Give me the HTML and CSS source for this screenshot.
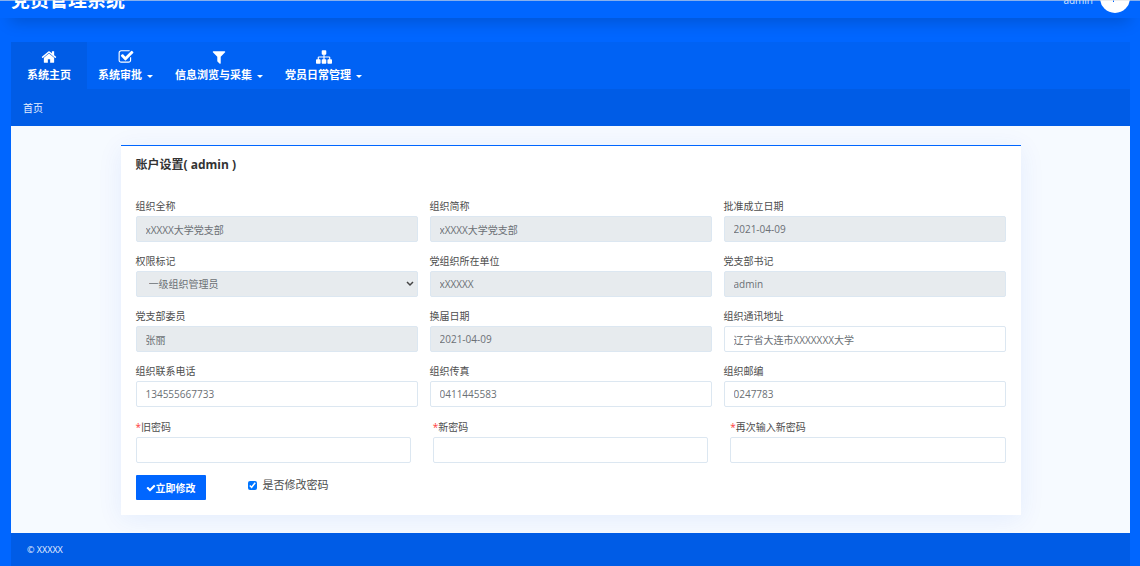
FILE: index.html
```
<!DOCTYPE html>
<html lang="zh-CN">
<head>
<meta charset="utf-8">
<title>党员管理系统</title>
<link rel="stylesheet" href="styles.css">
</head>
<body>
<header class="topbar">
  <h1 class="brand">党员管理系统</h1>
  <div class="user">
    <span class="user-name">admin</span>
    <svg class="avatar" viewBox="0 0 30 30" aria-hidden="true"><circle cx="15" cy="15" r="15" fill="#fff"/><path d="M13.500 11v8" stroke="#0066ff" stroke-width="1"/></svg>
  </div>
</header>
<div class="shell">
  <nav class="menu">
    <a class="menu-item active" href="#">
      <svg class="icon" viewBox="0 0 1792 1792"><path d="M1472 992v480q0 26-19 45t-45 19h-384v-384h-256v384h-384q-26 0-45-19t-19-45v-480q0-1 .5-3t.5-3l575-474 575 474q1 2 1 6zm223-69l-62 74q-8 9-21 11h-3q-13 0-21-7l-692-577-692 577q-12 8-24 7-13-2-21-11l-62-74q-8-10-7-23.500t11-21.500l719-599q32-26 76-26t76 26l244 204v-195q0-14 9-23t23-9h192q14 0 23 9t9 23v408l219 182q10 8 11 21.500t-7 23.500z"/></svg>
      <span class="menu-text">系统主页</span>
    </a>
    <a class="menu-item" href="#">
      <svg class="icon" viewBox="0 0 1792 1792"><path d="M1472 930v318q0 119-84.500 203.500t-203.500 84.500h-832q-119 0-203.500-84.500t-84.500-203.500v-832q0-119 84.500-203.500t203.500-84.500h832q63 0 117 25 15 7 18 23 3 17-9 29l-49 49q-10 10-23 10-3 0-9-2-23-6-45-6h-832q-66 0-113 47t-47 113v832q0 66 47 113t113 47h832q66 0 113-47t47-113v-254q0-13 9-22l64-64q10-10 23-10 6 0 12 3 20 8 20 29zm231-489l-814 814q-24 24-57 24t-57-24l-430-430q-24-24-24-57t24-57l110-110q24-24 57-24t57 24l263 263 647-647q24-24 57-24t57 24l110 110q24 24 24 57t-24 57z"/></svg>
      <span class="menu-text caret">系统审批</span>
    </a>
    <a class="menu-item" href="#">
      <svg class="icon" viewBox="0 0 1792 1792"><path d="M1595 295q17 41-14 70l-493 493v742q0 42-39 59-13 5-25 5-27 0-45-19l-256-256q-19-19-19-45v-486l-493-493q-31-29-14-70 17-39 59-39h1280q42 0 59 39z"/></svg>
      <span class="menu-text caret">信息浏览与采集</span>
    </a>
    <a class="menu-item" href="#">
      <svg class="icon" viewBox="0 0 1792 1792"><path d="M1792 1248v320q0 40-28 68t-68 28h-320q-40 0-68-28t-28-68v-320q0-40 28-68t68-28h96v-192h-512v192h96q40 0 68 28t28 68v320q0 40-28 68t-68 28h-320q-40 0-68-28t-28-68v-320q0-40 28-68t68-28h96v-192h-512v192h96q40 0 68 28t28 68v320q0 40-28 68t-68 28h-320q-40 0-68-28t-28-68v-320q0-40 28-68t68-28h96v-192q0-52 38-90t90-38h512v-192h-96q-40 0-68-28t-28-68v-320q0-40 28-68t68-28h320q40 0 68 28t28 68v320q0 40-28 68t-68 28h-96v192h512q52 0 90 38t38 90v192h96q40 0 68 28t28 68z"/></svg>
      <span class="menu-text caret">党员日常管理</span>
    </a>
  </nav>
  <div class="crumbs"><a href="#">首页</a></div>
  <main class="content">
    <form class="card">
      <h2 class="card-title">账户设置( admin )</h2>
      <div class="grid">
        <div class="field"><label for="full">组织全称</label><input id="full" type="text" value="xXXXX大学党支部" readonly></div>
        <div class="field"><label for="short">组织简称</label><input id="short" type="text" value="xXXXX大学党支部" readonly></div>
        <div class="field"><label for="founded">批准成立日期</label><input id="founded" type="text" value="2021-04-09" readonly></div>
        <div class="field"><label for="role">权限标记</label><select id="role" disabled><option>一级组织管理员</option></select></div>
        <div class="field"><label for="unit">党组织所在单位</label><input id="unit" type="text" value="xXXXXX" readonly></div>
        <div class="field"><label for="secretary">党支部书记</label><input id="secretary" type="text" value="admin" readonly></div>
        <div class="field"><label for="member">党支部委员</label><input id="member" type="text" value="张丽" readonly></div>
        <div class="field"><label for="term">换届日期</label><input id="term" type="text" value="2021-04-09" readonly></div>
        <div class="field"><label for="address">组织通讯地址</label><input id="address" type="text" value="辽宁省大连市XXXXXXX大学"></div>
        <div class="field"><label for="phone">组织联系电话</label><input id="phone" type="text" value="134555667733"></div>
        <div class="field"><label for="fax">组织传真</label><input id="fax" type="text" value="0411445583"></div>
        <div class="field"><label for="zip">组织邮编</label><input id="zip" type="text" value="0247783"></div>
      </div>
      <div class="grid passwords">
        <div class="field"><label for="old"><span class="required">*</span>旧密码</label><input id="old" type="password"></div>
        <div class="field"><label for="new"><span class="required">*</span>新密码</label><input id="new" type="password"></div>
        <div class="field"><label for="again"><span class="required">*</span>再次输入新密码</label><input id="again" type="password"></div>
      </div>
      <div class="actions">
        <button class="submit" type="button"><svg class="tick" viewBox="0 0 1792 1792"><path d="M1671 566q0 40-28 68l-724 724-136 136q-28 28-68 28t-68-28l-136-136-362-362q-28-28-28-68t28-68l136-136q28-28 68-28t68 28l294 295 656-657q28-28 68-28t68 28l136 136q28 28 28 68z"/></svg>立即修改</button>
        <div class="toggle"><input id="change" type="checkbox" checked><label for="change">是否修改密码</label></div>
      </div>
    </form>
  </main>
  <footer class="footer">© XXXXX</footer>
</div>
</body>
</html>
```
FILE: styles.css
```
* {
  box-sizing: border-box;
}

body {
  margin: 0;
  min-height: 100vh;
  display: flex;
  flex-direction: column;
  overflow: hidden;
  background: #0066ff;
  color: #4d4d4d;
  font: 10px/16px "Open Sans", "Noto Sans CJK SC", sans-serif;
}

body::before {
  content: "";
  position: fixed;
  top: 0;
  left: 0;
  right: 0;
  height: 1px;
  background: rgba(225, 225, 225, 0.6);
  z-index: 2;
}

a {
  color: inherit;
  text-decoration: none;
}

.topbar {
  display: flex;
  justify-content: space-between;
  align-items: center;
  height: 40px;
  margin-top: -22px;
  padding: 0 10px 0 11px;
  color: #fff;
  box-shadow: 0 14px 16px -10px rgba(0, 0, 0, 0.18);
}

.brand {
  margin: 0;
  padding-top: 4px;
  font-size: 19px;
  line-height: 36px;
}

.user {
  display: flex;
  align-items: center;
  gap: 7px;
  color: #d6e6ff;
}

.user-name {
  padding-top: 4px;
}

.avatar {
  width: 30px;
  height: 30px;
}

.shell {
  flex: 1;
  display: flex;
  flex-direction: column;
  margin: 24px 10px 0 11px;
}

.menu {
  display: flex;
  background: #0062f4;
  color: #fff;
}

.menu-item {
  display: flex;
  flex-direction: column;
  align-items: center;
  gap: 1px;
  padding: 7px 11px 5px;
}

.menu-item.active {
  padding: 7px 16px 5px;
  background: #005ce6;
}

.icon {
  width: 16px;
  height: 16px;
  fill: currentColor;
}

.menu-text {
  display: flex;
  align-items: center;
  gap: 5px;
  font-size: 11px;
  font-weight: 700;
  line-height: 18px;
}

.caret::after {
  content: "";
  margin-top: 2px;
  border: 3px solid transparent;
  border-top-color: currentColor;
  border-bottom: 0;
}

.crumbs {
  padding: 11px 12px 10px;
  background: #005ce6;
  color: #e5efff;
}

.content {
  padding: 19px 24px 18px;
  background: #f6faff;
}

.card {
  max-width: 900px;
  margin: 0 auto;
  padding: 10px 15px 15px;
  background: #fff;
  border-top: 1px solid #0066ff;
  box-shadow: 0 4px 24px rgba(0, 80, 230, 0.08);
}

.card-title {
  margin: 0 0 24px;
  color: #333;
  font-size: 12px;
  line-height: 18px;
}

.grid {
  display: grid;
  grid-template-columns: repeat(3, 1fr);
  gap: 11px 12px;
  margin-bottom: 12px;
}

.grid.passwords {
  column-gap: 22px;
}

.field {
  display: flex;
  flex-direction: column;
  gap: 2px;
}

.required {
  color: #ff3b3b;
}

.field input,
.field select {
  width: 100%;
  height: 26px;
  padding: 0 9px;
  border: 1px solid #dce7f1;
  border-radius: 2px;
  background-color: #fff;
  color: #6b7075;
  font: inherit;
  outline: 0;
}

.field input:read-only,
.field select {
  background-color: #e7ebee;
}

.field select {
  padding: 0 12px;
  opacity: 1;
  appearance: none;
  background-image: url("data:image/svg+xml,%3Csvg xmlns='http://www.w3.org/2000/svg' width='8' height='6'%3E%3Cpath d='M1 1l3 3 3-3' fill='none' stroke='%23444' stroke-width='1.500'/%3E%3C/svg%3E");
  background-repeat: no-repeat;
  background-position: right 3px center;
}

.actions {
  display: flex;
  align-items: flex-start;
  gap: 42px;
}

.submit {
  display: flex;
  align-items: center;
  height: 25px;
  padding: 0 10px;
  border: 0;
  border-radius: 1px;
  background: #0066ff;
  color: #fff;
  font: inherit;
  font-weight: 700;
}

.tick {
  width: 10px;
  height: 10px;
  fill: currentColor;
}

.toggle {
  display: flex;
  align-items: center;
  gap: 6px;
  font-size: 11px;
  line-height: 20px;
}

.toggle input {
  width: 9px;
  height: 9px;
  margin: 0;
}

.footer {
  flex: 1;
  padding: 9px 16px 8px;
  background: #005ce6;
  color: #e5efff;
  font-size: 9px;
}
```
